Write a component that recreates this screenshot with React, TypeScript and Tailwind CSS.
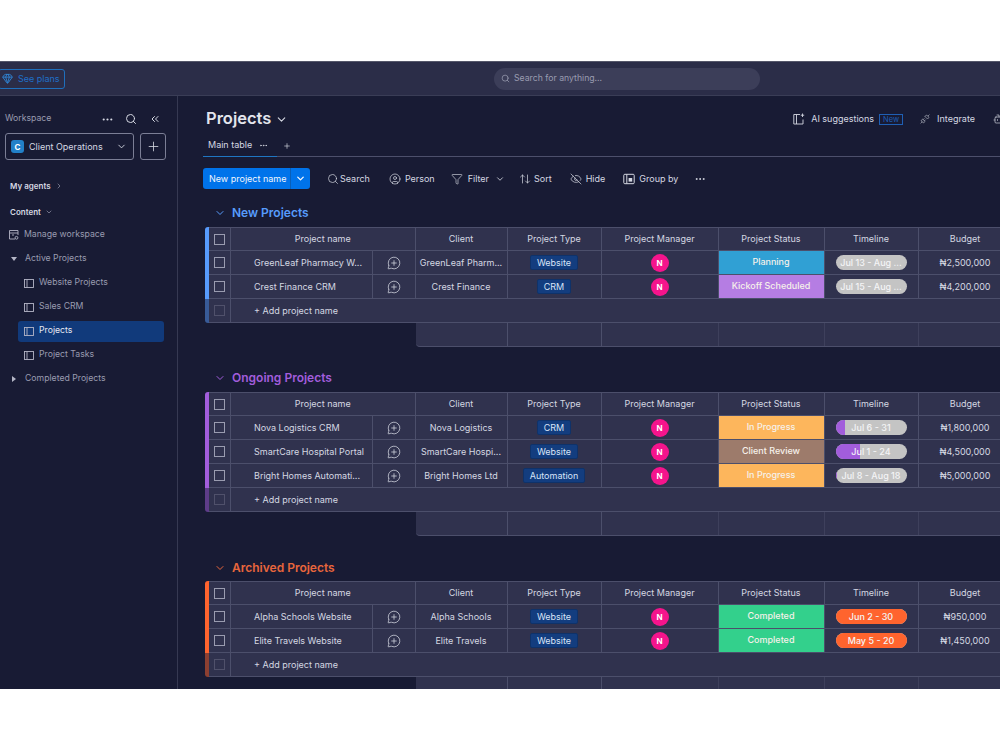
import {
  ArrowUpDown,
  Bot,
  ChevronDown,
  ChevronRight,
  ChevronsLeft,
  CircleUser,
  Ellipsis,
  EyeOff,
  Funnel,
  Gem,
  MessageCirclePlus,
  Plus,
  Search,
  Unplug,
} from 'lucide-react'

const gridCols = 'grid grid-cols-[22px_141.5px_43px_92px_94px_117px_106px_94px_94px]'

type Status = { label: string; color: string }
type Row = {
  name: string
  client: string
  type: string
  status: Status
  dates: string
  fill: number
  fillColor: string
  budget: string
}
type Group = { title: string; text: string; bar: string; mt: string; tableMt: string; rows: Row[] }

const planning = { label: 'Planning', color: 'bg-[#30a0d4]' }
const kickoff = { label: 'Kickoff Scheduled', color: 'bg-[#b57de3]' }
const inProgress = { label: 'In Progress', color: 'bg-[#fdb65c]' }
const review = { label: 'Client Review', color: 'bg-[#9d7b6b]' }
const completed = { label: 'Completed', color: 'bg-[#33d08c]' }

const groups: Group[] = [
  {
    title: 'New Projects',
    text: 'text-[#579bfc]',
    bar: 'bg-[#579bfc]',
    mt: 'mt-[14px]',
    tableMt: 'mt-[4px]',
    rows: [
      { name: 'GreenLeaf Pharmacy W...', client: 'GreenLeaf Pharm...', type: 'Website', status: planning, dates: 'Jul 13 - Aug ...', fill: 0, fillColor: '', budget: '₦2,500,000' },
      { name: 'Crest Finance CRM', client: 'Crest Finance', type: 'CRM', status: kickoff, dates: 'Jul 15 - Aug ...', fill: 0, fillColor: '', budget: '₦4,200,000' },
    ],
  },
  {
    title: 'Ongoing Projects',
    text: 'text-[#a25ddc]',
    bar: 'bg-[#a25ddc]',
    mt: 'mt-[21px]',
    tableMt: 'mt-[4px]',
    rows: [
      { name: 'Nova Logistics CRM', client: 'Nova Logistics', type: 'CRM', status: inProgress, dates: 'Jul 6 - 31', fill: 13, fillColor: 'bg-[#a25ddc]', budget: '₦1,800,000' },
      { name: 'SmartCare Hospital Portal', client: 'SmartCare Hospi...', type: 'Website', status: review, dates: 'Jul 1 - 24', fill: 35, fillColor: 'bg-[#a25ddc]', budget: '₦4,500,000' },
      { name: 'Bright Homes Automati...', client: 'Bright Homes Ltd', type: 'Automation', status: inProgress, dates: 'Jul 8 - Aug 18', fill: 2, fillColor: 'bg-[#a25ddc]', budget: '₦5,000,000' },
    ],
  },
  {
    title: 'Archived Projects',
    text: 'text-[#e8663c]',
    bar: 'bg-[#ff642e]',
    mt: 'mt-[22px]',
    tableMt: 'mt-[3px]',
    rows: [
      { name: 'Alpha Schools Website', client: 'Alpha Schools', type: 'Website', status: completed, dates: 'Jun 2 - 30', fill: 100, fillColor: 'bg-[#ff642e]', budget: '₦950,000' },
      { name: 'Elite Travels Website', client: 'Elite Travels', type: 'Website', status: completed, dates: 'May 5 - 20', fill: 100, fillColor: 'bg-[#ff642e]', budget: '₦1,450,000' },
    ],
  },
]

const headers = ['Client', 'Project Type', 'Project Manager', 'Project Status', 'Timeline', 'Budget']

function BoardIcon() {
  return (
    <svg width="10" height="9" viewBox="0 0 10 9" fill="none" stroke="#b4b6c6" strokeWidth="0.9">
      <rect x="0.5" y="0.5" width="9" height="8" />
      <path d="M3 0.5V8.5" />
    </svg>
  )
}

function Checkbox({ faded }: { faded?: boolean }) {
  return <span className={`h-[11px] w-[11px] border border-[#9a9cb0] ${faded ? 'opacity-30' : ''}`} />
}

function Cell({ children, className = '' }: { children?: React.ReactNode; className?: string }) {
  return (
    <div className={`flex h-[24px] items-center justify-center whitespace-nowrap border-r border-b border-[#4c4f6b] ${className}`}>
      {children}
    </div>
  )
}

function Timeline({ row }: { row: Row }) {
  return (
    <div className="relative flex h-[15px] w-[71px] items-center justify-center overflow-hidden rounded-full bg-[#c4c4c4]">
      <div className={`absolute inset-y-0 left-0 ${row.fillColor}`} style={{ width: `${row.fill}%` }} />
      <span className="relative text-[9px] font-medium text-[#f4f4f6]">{row.dates}</span>
    </div>
  )
}

function GroupTable({ group }: { group: Group }) {
  return (
    <section className={group.mt}>
      <div className="ml-[11px] flex h-[20px] items-center gap-[6px]">
        <ChevronDown size={12} className={group.text} />
        <h2 className={`text-[12px] font-semibold ${group.text}`}>{group.title}</h2>
      </div>
      <div className={`ml-[2px] ${group.tableMt}`}>
        <div className="flex">
          <div className="flex w-[4px] shrink-0 flex-col overflow-hidden rounded-l-[3px]">
            <div className={`flex-1 ${group.bar}`} />
            <div className={`h-[24px] opacity-50 ${group.bar}`} />
          </div>
          <div className="shrink-0 bg-[#30324e] text-[9px] text-[#d5d8e2]">
            <div className={gridCols}>
              <Cell className="border-t"><Checkbox /></Cell>
              <Cell className="col-span-2 border-t">Project name</Cell>
              {headers.map((h) => (
                <Cell key={h} className="border-t">{h}</Cell>
              ))}
            </div>
            {group.rows.map((row) => (
              <div key={row.name} className={gridCols}>
                <Cell><Checkbox /></Cell>
                <Cell className="!justify-start pl-[23px]">{row.name}</Cell>
                <Cell><MessageCirclePlus size={14} strokeWidth={1.3} className="text-[#d5d8e2]" /></Cell>
                <Cell>{row.client}</Cell>
                <Cell>
                  <span className="rounded-[2px] border border-[#0f3269] bg-[#133d7f] px-[6px] text-[#d8e4f8]">{row.type}</span>
                </Cell>
                <Cell>
                  <span className="flex h-[18px] w-[18px] items-center justify-center rounded-full bg-[#f5148c] text-[8px] font-bold text-white">N</span>
                </Cell>
                <Cell className={`pb-[1px] font-medium text-[#f6f1ea] ${row.status.color}`}>{row.status.label}</Cell>
                <Cell><Timeline row={row} /></Cell>
                <Cell>{row.budget}</Cell>
              </div>
            ))}
            <div className={gridCols}>
              <Cell><Checkbox faded /></Cell>
              <div className="col-span-8 flex h-[24px] items-center border-b border-[#4c4f6b] pl-[23px]">+ Add project name</div>
            </div>
          </div>
        </div>
        <div className="ml-[210.5px] flex h-[24px] w-[800px] overflow-hidden rounded-bl-[4px] border-b border-[#4c4f6b] bg-[#30324e]">
          <div className="w-[92px] border-r border-[#4c4f6b]" />
          <div className="w-[94px] border-r border-[#4c4f6b]" />
          <div className="w-[117px] border-r border-[#3e405c]" />
          <div className="w-[106px] border-r border-[#3e405c]" />
          <div className="w-[94px] border-r border-[#3e405c]" />
        </div>
      </div>
    </section>
  )
}

function Sidebar() {
  const boards = ['Website Projects', 'Sales CRM', 'Projects', 'Project Tasks']
  return (
    <aside className="flex w-[178px] shrink-0 flex-col border-r border-[#363952] pt-[15px] text-[8.7px] text-[#9a9cb0]">
      <div className="flex h-[16px] items-center pl-[5px] pr-[16px]">
        <span>Workspace</span>
        <Ellipsis size={13} className="ml-auto text-[#d5d8e2]" />
        <Search size={12} className="ml-[11px] text-[#d5d8e2]" />
        <ChevronsLeft size={12} className="ml-[12px] text-[#d5d8e2]" />
      </div>
      <div className="mt-[6px] flex gap-[6px] pl-[5px]">
        <div className="flex h-[27px] w-[129px] items-center rounded-[3px] border border-[#7b7e95] pl-[5px] pr-[6px] text-[9px] text-[#d5d8e2]">
          <span className="flex h-[13px] w-[13px] items-center justify-center rounded-[3px] bg-[#2280c8] text-[8px] font-bold text-white">C</span>
          <span className="ml-[5px]">Client Operations</span>
          <ChevronDown size={11} className="ml-auto" />
        </div>
        <div className="flex h-[27px] w-[26px] items-center justify-center rounded-[3px] border border-[#7b7e95] text-[#d5d8e2]">
          <Plus size={15} strokeWidth={1.3} />
        </div>
      </div>
      <div className="mt-[19px] flex h-[14px] items-center gap-[4px] pl-[10px] text-[8px] font-semibold text-[#d5d8e2]">
        My agents <ChevronRight size={8} className="text-[#9a9cb0]" />
      </div>
      <div className="mt-[12px] flex h-[14px] items-center gap-[4px] pl-[10px] text-[8px] font-semibold text-[#d5d8e2]">
        Content <ChevronDown size={8} className="text-[#9a9cb0]" />
      </div>
      <div className="mt-[4px] flex h-[24px] items-center gap-[5px] pl-[9px]">
        <svg width="10" height="10" viewBox="0 0 10 10" fill="none" stroke="#b4b6c6" strokeWidth="0.9">
          <path d="M6 9H0.5V0.5H9V5M0.5 3H9M3 5H5" />
          <circle cx="7.5" cy="7.8" r="1.4" />
        </svg>
        Manage workspace
      </div>
      <div className="flex h-[24px] items-center gap-[8px] pl-[11px]">
        <span className="h-0 w-0 border-x-[3px] border-t-[4px] border-x-transparent border-t-[#b4b6c6]" />
        Active Projects
      </div>
      {boards.map((b) =>
        b === 'Projects' ? (
          <div key={b} className="ml-[18px] flex h-[24px] w-[146px] items-center">
            <div className="flex h-[21px] w-full items-center gap-[5px] rounded-[3px] bg-[#113a7b] pl-[6px] text-[#e6e9f2]">
              <BoardIcon />
              {b}
            </div>
          </div>
        ) : (
          <div key={b} className="flex h-[24px] items-center gap-[5px] pl-[24px]">
            <BoardIcon />
            {b}
          </div>
        ),
      )}
      <div className="flex h-[24px] items-center gap-[9px] pl-[12px]">
        <span className="h-0 w-0 border-y-[3px] border-l-[4px] border-y-transparent border-l-[#b4b6c6]" />
        Completed Projects
      </div>
    </aside>
  )
}

function Toolbar() {
  return (
    <div className="mt-[11px] flex h-[21px] items-center whitespace-nowrap text-[9px] text-[#d5d8e2]">
      <div className="flex h-[21px] w-[107px] items-center overflow-hidden rounded-[3px] bg-[#0073ea] text-[#f2f6fd]">
        <span className="flex-1 border-r border-[#0a5fb8] pl-[6px] leading-[21px]">New project name</span>
        <ChevronDown size={11} strokeWidth={3} className="mx-[4px]" />
      </div>
      <Search size={12} strokeWidth={1.4} className="ml-[17px]" />
      <span className="ml-[1px]">Search</span>
      <CircleUser size={12} strokeWidth={1.4} className="ml-[19px]" />
      <span className="ml-[4px]">Person</span>
      <Funnel size={12} strokeWidth={1.3} className="ml-[16px]" />
      <span className="ml-[5px]">Filter</span>
      <ChevronDown size={10} className="ml-[6px]" />
      <ArrowUpDown size={12} strokeWidth={1.4} className="ml-[14px]" />
      <span className="ml-[3px]">Sort</span>
      <EyeOff size={12} strokeWidth={1.4} className="ml-[18px]" />
      <span className="ml-[4px]">Hide</span>
      <svg width="12" height="12" viewBox="0 0 12 12" fill="none" stroke="currentColor" strokeWidth="1" className="ml-[18px]">
        <rect x="0.8" y="1.3" width="10.4" height="9.4" rx="1" />
        <path d="M3.8 1.3V10.7" />
        <rect x="5.6" y="5" width="3.6" height="3.6" fill="currentColor" stroke="none" />
      </svg>
      <span className="ml-[4px]">Group by</span>
      <Ellipsis size={12} className="ml-[16px]" />
    </div>
  )
}

function Header() {
  return (
    <div className="pt-[11px]">
      <div className="flex h-[24px] items-center pl-[28px] text-[9px] text-[#d5d8e2]">
        <h1 className="pb-[2px] text-[16.5px] font-semibold text-[#e3e5ec]">Projects</h1>
        <ChevronDown size={13} className="ml-[4px]" />
        <svg width="12" height="12" viewBox="0 0 12 12" fill="none" stroke="#d5d8e2" strokeWidth="0.9" className="ml-auto">
          <path d="M7 1.5H0.8V11H10V6.5M3.5 1.5V11" />
          <path d="M9.5 0.5V4M7.8 2.2H11.2" />
        </svg>
        <span className="ml-[6px]">AI suggestions</span>
        <span className="ml-[5px] border border-[#1f5fb4] px-[3px] text-[7.5px] leading-[9px] text-[#1f5fb4]">New</span>
        <Unplug size={10} strokeWidth={1.3} className="ml-[17px]" />
        <span className="ml-[7px]">Integrate</span>
        <Bot size={12} strokeWidth={1.3} className="ml-[18px] mr-[-5px]" />
      </div>
      <div className="ml-[25px] mt-[4px] flex h-[22px] items-center border-b border-[#4c4f6b] text-[9px] text-[#d5d8e2]">
        <div className="flex h-[22px] w-[74px] items-center gap-[7px] border-b border-[#1f76c2] pl-[5px]">
          Main table
          <Ellipsis size={9} />
        </div>
        <Plus size={8} strokeWidth={2} className="ml-[6px]" />
      </div>
    </div>
  )
}

export default function App() {
  return (
    <div className="flex h-[750px] flex-col bg-white font-['Inter',sans-serif]">
      <div className="h-[61px]" />
      <div className="flex h-[628px] flex-col overflow-hidden bg-[#181b34]">
        <div className="flex h-[35px] shrink-0 items-center border-y border-[#3a3d56] border-t-[#55576a] bg-[#2b2d48]">
          <div className="-ml-[2px] flex h-[20px] w-[67px] items-center gap-[5px] rounded-[3px] border border-[#1f6fbc] pl-[3px] text-[9px] text-[#1f6fc8]">
            <Gem size={11} className="text-[#2f86d6]" />
            See plans
          </div>
          <div className="ml-[429px] flex h-[22px] w-[266px] items-center gap-[4px] rounded-full bg-[#3c3e59] pl-[7px] text-[8.7px] text-[#9a9cb0]">
            <Search size={9} />
            Search for anything...
          </div>
        </div>
        <div className="flex min-h-0 flex-1">
          <Sidebar />
          <main className="min-w-0 flex-1 overflow-hidden">
            <Header />
            <div className="pl-[25px]">
              <Toolbar />
              {groups.map((g) => (
                <GroupTable key={g.title} group={g} />
              ))}
            </div>
          </main>
        </div>
      </div>
      <div className="flex-1" />
    </div>
  )
}
